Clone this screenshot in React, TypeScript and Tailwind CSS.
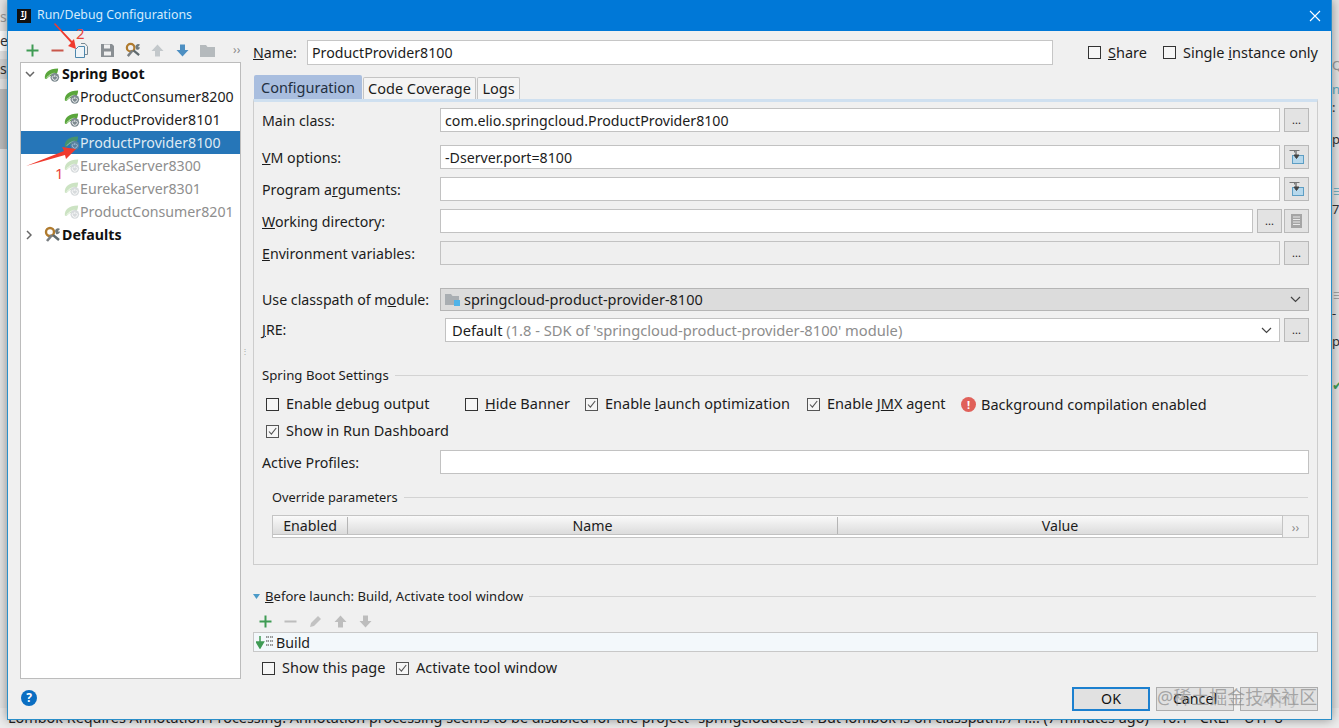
import React from "react";

const FONT = "font-['Noto_Sans','Noto_Sans_CJK_SC',sans-serif]";

function Spring({ dim = false, sel = false }: { dim?: boolean; sel?: boolean }) {
  return (
    <svg width="16" height="17" viewBox="0 0 17 17" className={dim ? "opacity-30 shrink-0" : sel ? "opacity-60 shrink-0" : "shrink-0"}>
      <path d="M1 13C0 7 5 2 15 2c0 3-1 6-3 7-3 1-5 0-8 3l-1 1z" fill="#5aa63c" />
      <path d="M3 12c2-3 5-4 8-5" stroke="#d8ecd0" strokeWidth="1" fill="none" />
      <circle cx="11.5" cy="11.5" r="4.6" fill="#7d8a90" />
      <path d="M11.5 8.8v2.4M9.8 10a2.6 2.6 0 1 0 3.4 0" stroke="#fff" strokeWidth="0.9" fill="none" />
    </svg>
  );
}

function Wrench({ size = 17 }: { size?: number }) {
  return (
    <svg width={size} height={size} viewBox="0 0 17 17" className="shrink-0">
      <circle cx="6" cy="6" r="4" fill="none" stroke="#b07b2e" strokeWidth="2.4" />
      <path d="M8 9l-5 6" stroke="#7a7f82" strokeWidth="2.6" />
      <path d="M9 9l6 5" stroke="#5f6a6e" strokeWidth="2.4" />
      <path d="M11 5a3 3 0 0 1 5-2l-2 2 1 1 1-1a3 3 0 0 1-4 3z" fill="#6e7a7e" />
    </svg>
  );
}

function Plus() {
  return (
    <svg width="13" height="13" viewBox="0 0 13 13">
      <path d="M6.5 0.5v12M0.5 6.5h12" stroke="#3f9b54" strokeWidth="2" />
    </svg>
  );
}

function Minus({ color }: { color: string }) {
  return (
    <svg width="13" height="13" viewBox="0 0 13 13">
      <path d="M0.5 6.5h12" stroke={color} strokeWidth="2" />
    </svg>
  );
}

function ArrowV({ up, color }: { up: boolean; color: string }) {
  return (
    <svg width="13" height="13" viewBox="0 0 13 13" className={up ? "" : "rotate-180"}>
      <path d="M6.5 0.5L12.5 7H9v5.5H4V7H0.5z" fill={color} />
    </svg>
  );
}

function Box({ checked = false }: { checked?: boolean }) {
  return (
    <span className={`flex h-[13px] w-[13px] shrink-0 items-center justify-center border ${checked ? "border-[#555]" : "border-[#333]"} bg-[#f6f6f6]`}>
      {checked && (
        <svg width="11" height="11" viewBox="0 0 11 11">
          <path d="M2 5.5l2.4 2.6L9.2 2" stroke="#555" strokeWidth="1.1" fill="none" />
        </svg>
      )}
    </span>
  );
}

function DotsBtn() {
  return (
    <span className="flex h-[24px] w-[25px] shrink-0 items-end justify-center border border-[#b9b9b9] bg-[#e3e3e3] pb-[6px] text-[11px] leading-[10px] text-[#222]">
      ...
    </span>
  );
}

function InsertBtn() {
  return (
    <span className="flex h-[24px] w-[25px] shrink-0 items-center justify-center border border-[#b9b9b9] bg-[#e3e3e3]">
      <svg width="15" height="14" viewBox="0 0 15 14">
        <rect x="3.5" y="5.5" width="11" height="8" fill="#b6d8ec" stroke="#5d9ec4" />
        <path d="M0.5 0.5h10M5.5 0.5v2" stroke="#777" />
        <path d="M7 1v5M5 5h5L7.5 8.5z" stroke="#444" fill="#444" />
      </svg>
    </span>
  );
}

function Field({ label, value, className = "", children, gray = false }: { label: React.ReactNode; value?: string; className?: string; children?: React.ReactNode; gray?: boolean }) {
  return (
    <div className={`flex h-[24px] items-center pl-[8px] pr-[8px] ${className}`}>
      <span className="w-[178px] shrink-0 whitespace-nowrap pt-px">{label}</span>
      <div className={`flex h-full min-w-0 flex-1 items-center border border-[#c2c2c2] px-[4px] pt-px ${gray ? "bg-[#efefef]" : "bg-white"}`}>{value}</div>
      {children}
    </div>
  );
}

function Check({ label, checked = false, className = "" }: { label: React.ReactNode; checked?: boolean; className?: string }) {
  return (
    <label className={`flex shrink-0 items-center gap-[7px] whitespace-nowrap text-[14.5px] ${className}`}>
      <Box checked={checked} />
      <span>{label}</span>
    </label>
  );
}

function TreeRow({ name, dim = false, sel = false }: { name: string; dim?: boolean; sel?: boolean }) {
  return (
    <div className={`flex h-[23px] items-center gap-0 pl-[43px] ${sel ? "bg-[#2676b8] text-[#dfeaf3]" : dim ? "text-[#8e8e8e]" : "text-[#1c1c1c]"}`}>
      <Spring dim={dim} sel={sel} />
      <span className="whitespace-nowrap">{name}</span>
    </div>
  );
}

function Heading({ text, className = "", indent = "pl-[8px]", size = "text-[13.2px]" }: { text: React.ReactNode; className?: string; indent?: string; size?: string }) {
  return (
    <div className={`flex h-[20px] items-center gap-[6px] pr-[9px] ${indent} ${className}`}>
      <span className={`whitespace-nowrap pt-px ${size}`}>{text}</span>
      <span className="h-px flex-1 bg-[#d3d3d3]" />
    </div>
  );
}

function Button({ children, primary = false }: { children?: React.ReactNode; primary?: boolean }) {
  return (
    <span className={`flex h-[24px] w-[78px] items-center justify-center bg-[#e1e1e1] ${primary ? "border-2 border-[#1c80cf] text-[#111]" : "border border-[#adadad] text-[#111]"}`}>
      {children}
    </span>
  );
}

export default function App() {
  return (
    <div className={`relative h-[728px] w-[1339px] overflow-hidden bg-[#e4e4e4] text-[14.2px] text-[#1c1c1c] ${FONT}`}>
      {/* application behind the dialog */}
      <div className="flex h-full flex-col justify-between">
        <div className="flex justify-between">
          <div className="flex w-[7px] flex-col overflow-hidden pt-[7px] text-[14px] leading-[20px] text-[#333]">
            <span className="text-[#999]">s</span>
            <span className="mt-[4px] bg-white">e</span>
            <span className="mt-[8px] bg-[#d5d5d5]">s</span>
            <span className="mt-[10px] h-[60px] bg-[#bdbdbd]" />
          </div>
          <div className="flex w-[7px] flex-col overflow-hidden pt-[56px] text-[13px] leading-[18px] text-[#333]">
            <span className="text-[#999]">Q</span>
            <span className="mt-[6px] text-[#5aa9c0]">n</span>
            <span>:</span>
            <span className="mt-[14px]">p</span>
            <span className="mt-[34px] text-[#5aa9c0]">≡</span>
            <span>7</span>
            <span className="mt-[68px] text-[#999]">≡</span>
            <span>-</span>
            <span className="mt-[10px]">p</span>
            <span className="mt-[26px] text-[#3f9b54]">✔</span>
          </div>
        </div>
        <div className="h-[20px] overflow-hidden whitespace-nowrap bg-[#ececec] pl-[8px] text-[14.4px] leading-[20px] text-[#222]">
          Lombok Requires Annotation Processing: Annotation processing seems to be disabled for the project "springcloudtest". But lombok is on classpath.// Fi... (7 minutes ago)&nbsp;&nbsp; 10:1&nbsp;&nbsp; CRLF&nbsp;&nbsp; UTF-8
        </div>
      </div>

      {/* dialog */}
      <div className="absolute left-[7px] top-0 flex h-[720px] w-[1325px] flex-col border-x border-b border-x-[#2a8fc9] border-b-[#2a8fc9] bg-[#f0f0f0] shadow-[0_0_10px_rgba(0,0,0,0.4)]">
        <div className="flex h-[31px] shrink-0 items-center justify-between bg-[#0078d7] pl-[9px] pr-[10px] text-[12.3px] text-[#d5ebfb]">
          <div className="flex items-center gap-[6px]">
            <span className="flex h-[14px] w-[14px] flex-col items-center bg-[#111] text-[8px] font-bold leading-[9px] text-white">
              IJ
              <span className="mr-[4px] mt-[1px] h-px w-[5px] bg-white" />
            </span>
            <span>Run/Debug Configurations</span>
          </div>
          <svg width="12" height="12" viewBox="0 0 12 12">
            <path d="M1 1l10 10M11 1L1 11" stroke="#fff" strokeWidth="1.1" />
          </svg>
        </div>

        <div className="flex min-h-0 flex-1">
          {/* left */}
          <div className="w-[233px] shrink-0 pl-[12px]">
            <div className="flex h-[31px] items-center gap-[12px] pl-[6px] pt-[7px]">
              <Plus />
              <Minus color="#c9574a" />
              <svg width="13" height="15" viewBox="0 0 13 15" className="-ml-px mr-px">
                <path d="M3.5 3.5h6v11h-9V6.500z" fill="#eef4f8" stroke="#4d87ad" />
                <path d="M6 0.500h4l2.500 3v8H10" fill="none" stroke="#7a8a94" />
              </svg>
              <svg width="13" height="13" viewBox="0 0 13 13">
                <path d="M0 0h11l2 2v11H0z" fill="#8a8f93" />
                <rect x="3" y="0.500" width="6" height="4" fill="#f0f0f0" />
                <rect x="3" y="7.500" width="7" height="4" fill="#f0f0f0" />
              </svg>
              <span className="flex w-[13px] justify-center"><Wrench size={16} /></span>
              <ArrowV up color="#c3c8cb" />
              <ArrowV up={false} color="#4d8fc2" />
              <svg width="15" height="13" viewBox="0 0 15 13" className="-ml-[1px]">
                <path d="M0 1h6l1.500 2H15v10H0z" fill="#b5babd" />
              </svg>
              <span className="ml-[6px] text-[12px] leading-none text-[#8b8b8b]">››</span>
            </div>
            <div className="h-[617px] w-[221px] border border-[#bcbcbc] bg-white">
              <div className="flex h-[22px] items-center pl-[3px] font-bold text-[#111]">
                <svg width="10" height="6" viewBox="0 0 10 6" className="ml-[1px] mr-[9px]">
                  <path d="M1 1l4 4 4-4" stroke="#666" strokeWidth="1.5" fill="none" />
                </svg>
                <span className="mr-[2px]"><Spring /></span>
                Spring Boot
              </div>
              <TreeRow name="ProductConsumer8200" />
              <TreeRow name="ProductProvider8101" />
              <TreeRow name="ProductProvider8100" sel />
              <TreeRow name="EurekaServer8300" dim />
              <TreeRow name="EurekaServer8301" dim />
              <TreeRow name="ProductConsumer8201" dim />
              <div className="flex h-[23px] items-center pl-[5px] font-bold text-[#111]">
                <svg width="6" height="10" viewBox="0 0 6 10" className="mr-[12px]">
                  <path d="M1 1l4 4-4 4" stroke="#666" strokeWidth="1.5" fill="none" />
                </svg>
                <span className="mr-[1px]"><Wrench /></span>
                Defaults
              </div>
            </div>
          </div>

          {/* splitter */}
          <div className="flex w-[12px] shrink-0 items-center justify-center pb-[10px] pr-[4px] text-[8px] leading-[3px] text-[#a5a5a5]">⋮</div>

          {/* right */}
          <div className="min-w-0 flex-1 pr-[13px]">
            <div className="mt-[9px] flex h-[25px] items-center">
              <span className="w-[54px] shrink-0"><u>N</u>ame:</span>
              <div className="flex h-full w-[746px] items-center border border-[#c6c6c6] bg-white px-[4px]">ProductProvider8100</div>
              <Check className="ml-[35px]" label={<><u>S</u>hare</>} />
              <Check className="ml-[16px]" label={<>Single <u>i</u>nstance only</>} />
            </div>

            <div className="mt-[10px] flex h-[24px] items-end pl-px text-[14.5px]">
              <span className="flex h-[24px] w-[108px] items-center justify-center rounded-t-[2px] bg-[#a9bedf] pt-px text-[#23303f]">Configuration</span>
              <span className="ml-px flex h-[22px] w-[113px] items-center justify-center rounded-t-[2px] border border-b-0 border-[#c4c4c4] bg-[#f4f4f4]">Code Coverage</span>
              <span className="ml-px flex h-[22px] w-[43px] items-center justify-center rounded-t-[2px] border border-b-0 border-[#c4c4c4] bg-[#f4f4f4]">Logs</span>
            </div>

            <div className="h-[466px] border border-t-[3px] border-[#cdcdcd] border-t-[#cfe0f0] pt-[6px]">
              <Field label="Main class:" value="com.elio.springcloud.ProductProvider8100">
                <span className="ml-[4px]"><DotsBtn /></span>
              </Field>
              <Field className="mt-[13px]" label={<><u>V</u>M options:</>} value="-Dserver.port=8100">
                <span className="ml-[4px]"><InsertBtn /></span>
              </Field>
              <Field className="mt-[8px]" label={<>Program a<u>r</u>guments:</>}>
                <span className="ml-[4px]"><InsertBtn /></span>
              </Field>
              <Field className="mt-[8px]" label={<><u>W</u>orking directory:</>}>
                <span className="ml-[4px]"><DotsBtn /></span>
                <span className="ml-[2px] flex h-[24px] w-[25px] shrink-0 items-center justify-center border border-[#b9b9b9] bg-[#e3e3e3]">
                  <svg width="11" height="14" viewBox="0 0 11 14">
                    <rect width="11" height="14" fill="#a5a5a5" />
                    <path d="M2 3h7M2 5.500h7M2 8h7M2 10.500h7" stroke="#e8e8e8" />
                  </svg>
                </span>
              </Field>
              <Field className="mt-[8px]" gray label={<><u>E</u>nvironment variables:</>}>
                <span className="ml-[4px]"><DotsBtn /></span>
              </Field>

              <div className="mt-[23px] flex h-[23px] items-center pl-[8px] pr-[8px]">
                <span className="w-[178px] shrink-0">Use classpath of m<u>o</u>dule:</span>
                <div className="flex h-full flex-1 items-center border border-[#b5b5b5] bg-[#dcdcdc] pl-[4px] pr-[7px]">
                  <svg width="16" height="14" viewBox="0 0 16 14" className="mr-[3px]">
                    <path d="M0 1h6l1.500 2H14v9H0z" fill="#a9aeb2" />
                    <rect x="9" y="7" width="6" height="6" fill="#4fb3e8" />
                  </svg>
                  <span className="flex-1 text-[14.5px]">springcloud-product-provider-8100</span>
                  <svg width="11" height="7" viewBox="0 0 11 7">
                    <path d="M1 1l4.500 4.500L10 1" stroke="#444" strokeWidth="1.2" fill="none" />
                  </svg>
                </div>
              </div>

              <div className="mt-[7px] flex h-[24px] items-center pl-[8px] pr-[8px]">
                <span className="w-[183px] shrink-0"><u>J</u>RE:</span>
                <div className="flex h-full flex-1 items-center border border-[#c2c2c2] bg-white pl-[6px] pr-[7px]">
                  <span className="flex-1 whitespace-nowrap text-[14.7px]">Default <span className="text-[#8d8d8d]">(1.8 - SDK of 'springcloud-product-provider-8100' module)</span></span>
                  <svg width="11" height="7" viewBox="0 0 11 7">
                    <path d="M1 1l4.500 4.500L10 1" stroke="#444" strokeWidth="1.2" fill="none" />
                  </svg>
                </div>
                <span className="ml-[4px]"><DotsBtn /></span>
              </div>

              <Heading className="mt-[23px]" text="Spring Boot Settings" />

              <div className="mt-[8px] flex h-[22px] items-center pl-[12px]">
                <Check className="w-[199px]" label={<>Enable <u>d</u>ebug output</>} />
                <Check className="w-[120px]" label={<><u>H</u>ide Banner</>} />
                <Check className="w-[222px]" checked label={<>Enable <u>l</u>aunch optimization</>} />
                <Check className="w-[154px]" checked label={<>Enable J<u>M</u>X agent</>} />
                <span className="mr-[5px] flex h-[15px] w-[15px] shrink-0 items-center justify-center rounded-full bg-[#e0615a] text-[11px] font-bold leading-none text-white">!</span>
                <span className="whitespace-nowrap pt-px text-[14.5px]">Background compilation enabled</span>
              </div>
              <div className="mt-[5px] flex h-[22px] items-center pl-[12px]">
                <Check checked label="Show in Run Dashboard" />
              </div>

              <div className="mt-[8px] flex h-[24px] items-center pl-[8px] pr-[8px]">
                <span className="w-[178px] shrink-0 pt-px">Active Profiles:</span>
                <div className="h-full flex-1 border border-[#c2c2c2] bg-white" />
              </div>

              <Heading className="mt-[13px]" indent="pl-[18px]" size="text-[12.8px]" text="Override parameters" />

              <div className="ml-[18px] mr-[8px] mt-[8px] flex h-[23px]">
                <div className="flex flex-1 flex-col border border-[#c4c4c4] bg-white">
                  <div className="flex h-[19px] items-center border-b border-[#c2c2c2] bg-gradient-to-b from-[#fafafa] to-[#dcdcdc] pt-px">
                    <span className="flex h-full w-[75px] items-center justify-center border-r border-[#b5b5b5]">Enabled</span>
                    <span className="flex h-full w-[490px] items-center justify-center border-r border-[#b5b5b5]">Name</span>
                    <span className="flex h-full flex-1 items-center justify-center">Value</span>
                  </div>
                </div>
                <span className="flex w-[26px] items-end justify-center border border-l-0 border-[#c8c8c8] pb-[2px] text-[12px] leading-[14px] text-[#8b8b8b]">››</span>
              </div>
            </div>

            <div className="mt-[21px] flex h-[20px] items-center pr-[2px]">
              <svg width="7" height="5" viewBox="0 0 7 5" className="mr-[5px]">
                <path d="M0 0h7L3.500 5z" fill="#4b9ac8" />
              </svg>
              <span className="whitespace-nowrap pt-px text-[13.1px]"><u>B</u>efore launch: Build, Activate tool window</span>
              <span className="ml-[6px] h-px flex-1 bg-[#d3d3d3]" />
            </div>
            <div className="mt-[5px] flex h-[20px] items-center gap-[12px] pl-[6px]">
              <Plus />
              <Minus color="#bdbdbd" />
              <svg width="13" height="13" viewBox="0 0 13 13">
                <path d="M1 12l1-4 7-7 3 3-7 7z" fill="#c2c2c2" />
              </svg>
              <ArrowV up color="#bdbdbd" />
              <ArrowV up={false} color="#bdbdbd" />
            </div>
            <div className="mt-px flex h-[20px] items-center border border-[#c8c8c8] bg-[#f3f8fb] pl-[2px] pt-[2px]">
              <svg width="18" height="14" viewBox="0 0 18 14" className="-mt-[3px] mr-[2px]">
                <path d="M4 1v7M0.500 7h7L4 13z" stroke="#3f9b54" strokeWidth="1.5" fill="#3f9b54" />
                <path d="M10 2h3M14 2h3M10 6h3M14 6h3M10 10h3M14 10h3" stroke="#777" strokeWidth="1.6" strokeDasharray="1.500 0.500" />
              </svg>
              Build
            </div>
            <div className="mt-[5px] flex h-[22px] items-center pl-[9px]">
              <Check className="w-[134px]" label="Show this page" />
              <Check checked label="Activate tool window" />
            </div>
          </div>
        </div>

        {/* footer */}
        <div className="flex h-[40px] shrink-0 items-start justify-between pl-[13px] pr-[13px] pt-[8px]">
          <span className="mt-[3px] flex h-[16px] w-[16px] items-center justify-center rounded-full bg-[#0a6ec2] text-[12px] font-bold leading-none text-white">?</span>
          <div className="flex gap-[6px]">
            <Button primary>OK</Button>
            <Button>Cancel</Button>
            <Button><span className="text-[#c4c4c4]">Apply</span></Button>
          </div>
        </div>
      </div>

      {/* annotations drawn over the screenshot */}
      <svg width="100" height="180" viewBox="0 0 100 180" className="pointer-events-none absolute left-0 top-0">
        <path d="M26 166L64 151 62 147 76 149 66 159 65 155z" fill="#f03a2e" />
        <path d="M54 24L71 43 68 46 76 49 74 39 72 41 55 23z" fill="#f03a2e" />
      </svg>
      <span className="absolute left-[76px] top-[23px] text-[15px] leading-[20px] text-[#e8453c]">2</span>
      <span className="absolute left-[55px] top-[163px] text-[15px] leading-[20px] text-[#e8453c]">1</span>

      {/* watermark */}
      <span className="pointer-events-none absolute left-[1157px] top-[684px] whitespace-nowrap text-[18px] leading-[26px] text-[#8a8a8a]/70">@稀土掘金技术社区</span>
    </div>
  );
}
